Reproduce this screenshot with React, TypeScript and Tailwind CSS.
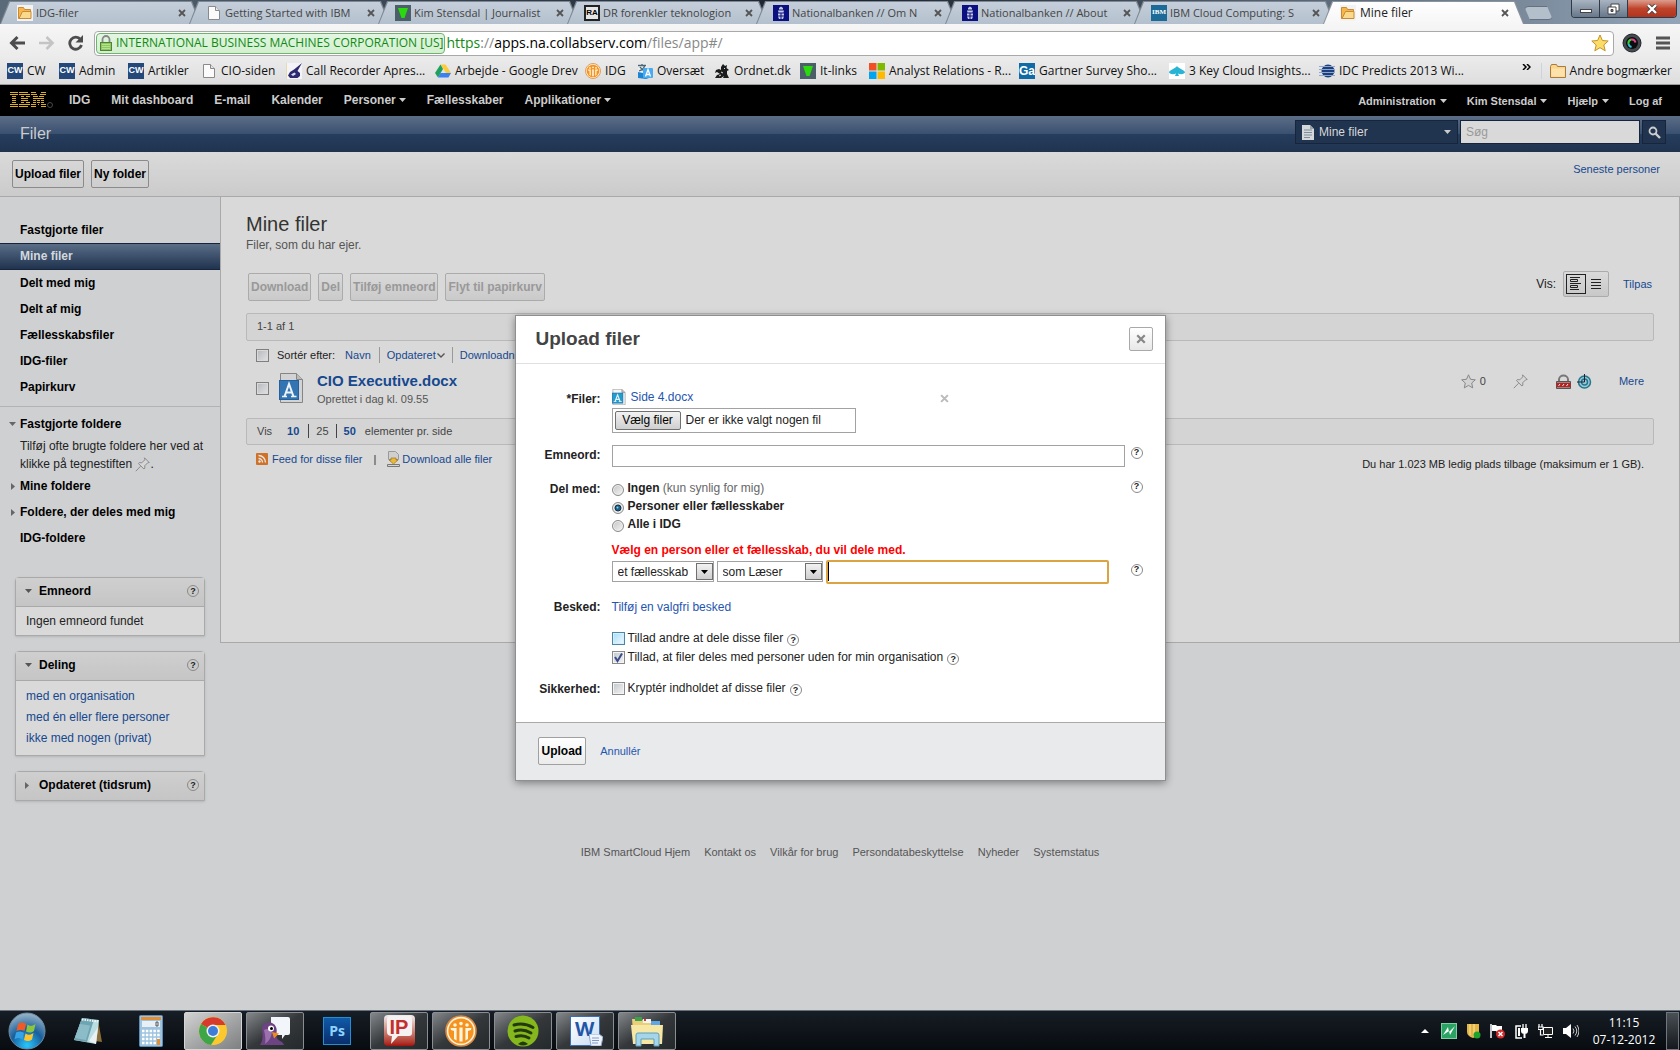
import type { ReactNode } from "react";

const PageIcon = () => (
	<svg width="16" height="16" viewBox="0 0 16 16" className="shrink-0">
		<path d="M2.5 1.5h7l4 4v9h-11z" fill="#fbfbfb" stroke="#8a8a8a" />
		<path d="M9.5 1.5v4h4" fill="#e6e6e6" stroke="#8a8a8a" />
	</svg>
);

const FolderTabIcon = () => (
	<svg width="16" height="16" viewBox="0 0 16 16" className="shrink-0">
		<rect width="16" height="16" fill="#f3f3f3" />
		<path d="M1.500 2.500h5l1 2h6v9h-12z" fill="#f7b64c" stroke="#c98a35" />
		<path d="M5.500 6.500h8.500v7h-12z" fill="#fbd98c" stroke="#c98a35" />
	</svg>
);

const GreenTriangleIcon = () => (
	<svg width="16" height="16" viewBox="0 0 16 16" className="shrink-0">
		<rect width="16" height="16" fill="#4b5f69" />
		<path d="M3 3h10l-3.500 10h-3z" fill="#2bd90f" />
	</svg>
);

const BankIcon = () => (
	<svg width="16" height="16" viewBox="0 0 16 16" className="shrink-0">
		<rect width="16" height="16" fill="#0b1080" />
		<path d="M6 3l2-1.500L10 3v1.500H6zM5 5.500h6l-.5 2h-5zM5 8.500h2.500v2H5zM8.500 8.500H11v2H8.500zM5 11.500h2.500v2.500H6zM8.500 11.500H11l-1 2.500H8.500z" fill="#c5cbe6" />
	</svg>
);

const RaIcon = () => (
	<span className="flex size-4 shrink-0 items-center justify-center border-2 border-[#222] bg-[#e6e6e6] font-['Liberation_Sans',sans-serif] text-[8px] font-bold leading-none text-black">RA</span>
);

const IbmSmallIcon = () => (
	<span className="flex size-4 shrink-0 items-center justify-center bg-[#1b6a97] font-['Liberation_Serif',serif] text-[7px] font-bold leading-none text-white">IBM</span>
);

const CwIcon = () => (
	<span className="flex size-4 shrink-0 items-center justify-center bg-[#25487a] font-['Liberation_Sans',sans-serif] text-[9px] font-bold leading-none text-white">CW</span>
);

const CallIcon = () => (
	<svg width="16" height="16" viewBox="0 0 16 16">
		<rect width="16" height="16" fill="#f4f4f8" />
		<path d="M16 0L8 6.500 4 9 2 12.500 4 15h7.500L14 13v-3l-2.500-2z" fill="#2d2a70" />
		<path d="M5 11.500l3.500-2 1.500 1.500-3 2z" fill="#dcdcef" />
		<path d="M0 0h1v16H0z" fill="#e3dcae" />
	</svg>
);

const DriveIcon = () => (
	<svg width="16" height="16" viewBox="0 0 16 16">
		<path d="M5.500 1.500h5L16 10h-5z" fill="#fccb35" />
		<path d="M5.500 1.500L8 6l-5 8.500L0 10z" fill="#1fa15d" />
		<path d="M5.500 10H16l-2.500 4.500H3z" fill="#3d80f0" />
	</svg>
);

const IdgIcon = ({ size = 16 }: { size?: number }) => (
	<svg width={size} height={size} viewBox="0 0 16 16">
		<circle cx="8" cy="8" r="7.500" fill="#fff1d8" stroke="#d98a3c" strokeWidth=".8" />
		<circle cx="8" cy="8" r="6.300" fill="#f6921e" />
		<g fill="#fff4dc">
			<circle cx="5" cy="5" r=".9" />
			<circle cx="8" cy="4.300" r=".9" />
			<circle cx="11" cy="5" r=".9" />
			<path d="M2.800 6.500h3v6.200L4.500 12V8L3 7.500zM7.200 6.200h1.600v7H7.200zM13.200 6.500h-3v6.200l1.300-.7V8l1.500-.5z" />
		</g>
	</svg>
);

const TranslateIcon = () => (
	<svg width="16" height="16" viewBox="0 0 16 16">
		<rect x="1" y="1" width="9" height="9" fill="#e9eef2" />
		<path d="M1 2.500h8M5 1v2M2 8c3-1 5-3 5.500-5M3 4c1 2 3 3 5 4" stroke="#4b6570" strokeWidth="1.300" fill="none" />
		<path d="M1 9l5 1 9-5v9l-6 2-8-1z" fill="#1c84d6" />
		<rect x="6" y="5" width="10" height="10" rx="1" fill="#4aaaf0" />
		<path d="M8.500 13.500L11 6.500l2.500 7M9.500 11.500h3" stroke="#fff" strokeWidth="1.300" fill="none" />
	</svg>
);

const LionIcon = () => (
	<svg width="16" height="16" viewBox="0 0 16 16">
		<path d="M9 1l2 2 2-1-.5 3L15 7l-2 1v3l2 4H9l1-2-3 2H1l2-3 3-1-3-2-2 1 1-3 3-1 2 1V4z" fill="#1b1b1b" />
		<path d="M7 9l2 1M10 5l1 1M5 13l2-1" stroke="#ddd" />
	</svg>
);

const WindowsTilesIcon = () => (
	<svg width="16" height="16" viewBox="0 0 16 16">
		<path d="M0 0h7.500v7.500H0z" fill="#f25022" />
		<path d="M8.500 0H16v7.500H8.500z" fill="#7fba00" />
		<path d="M0 8.500h7.500V16H0z" fill="#00a4ef" />
		<path d="M8.500 8.500H16V16H8.500z" fill="#ffb900" />
	</svg>
);

const GartnerIcon = () => (
	<span className="flex size-4 shrink-0 items-center justify-center overflow-hidden bg-[#0f6aa6] font-['Liberation_Sans',sans-serif] text-[12px] font-bold leading-none text-white">Ga</span>
);

const CloudSpadeIcon = () => (
	<svg width="16" height="16" viewBox="0 0 16 16">
		<rect width="16" height="16" fill="#fff" />
		<path d="M8 3c1 2 7 4 8 6 0 2-4 3-7 1.500l1 2.500H6l1-2.500C4 12 0 11 0 9c1-2 7-4 8-6z" fill="#28b4d4" />
	</svg>
);

const IdcIcon = () => (
	<svg width="16" height="16" viewBox="0 0 16 16">
		<circle cx="9" cy="8" r="6.500" fill="#1c3f7d" />
		<path d="M0 3.500h16M0 6.500h16M0 9.500h16M0 12.500h16" stroke="#8ea6cc" />
	</svg>
);

const YellowFolderIcon = () => (
	<svg width="16" height="16" viewBox="0 0 16 16">
		<path d="M.5 3.500l1-2h5l1 2h8v11H.5z" fill="#fbd58c" stroke="#a87b3f" />
		<path d="M1.500 5.500h13v8h-13z" fill="#fde3ab" />
	</svg>
);

const CloseX = ({ size, color }: { size: number; color: string }) => (
	<svg width={size} height={size} viewBox="0 0 8 8">
		<path d="M1 1l6 6M7 1L1 7" stroke={color} strokeWidth="1.800" />
	</svg>
);

const Caret = ({ color = "#ccc" }: { color?: string }) => (
	<svg width="7" height="4" viewBox="0 0 7 4">
		<path d="M0 0h7L3.500 4z" fill={color} />
	</svg>
);

const CaretRight = () => (
	<svg width="4" height="7" viewBox="0 0 4 7">
		<path d="M0 0v7l4-3.500z" fill="#666" />
	</svg>
);

const PinIcon = () => (
	<svg width="15" height="15" viewBox="0 0 15 15" className="inline-block align-middle">
		<path d="M9.500.8l4.700 4.700-1.500.3-3 3 .2 2.400-1 .8L3.500 6.600l.8-1 2.500.2 3-3z M5.500 9.300L.8 14.200" fill="#d6d6d6" stroke="#8b8b8b" />
	</svg>
);

const Help = ({ label = "Hjælp" }: { label?: string }) => (
	<button type="button" aria-label={label} className="flex size-3 shrink-0 items-center justify-center rounded-full border border-[#8a8a8a] text-[9px] font-bold leading-none text-[#222]">
		?
	</button>
);

const DocIcon = ({ small }: { small?: boolean }) => (
	<svg width={small ? 14 : 25} height={small ? 16 : 30} viewBox="0 0 25 30" preserveAspectRatio="none">
		<path d="M1.500.5h16l6 6v23h-22z" fill={small ? "#f5f5f5" : "#d3d3d3"} stroke="#858585" />
		<path d="M17.500.5v6h6" fill="#bbb" stroke="#858585" />
		<rect x=".5" y="7.500" width="19" height="19" fill={small ? "#1f9fcf" : "#3374b3"} stroke="#24609c" />
		<path d="M5.500 23.500L10 11l4.500 12.500M7 19.500h6" fill="none" stroke="#eef3f8" strokeWidth="2" />
		<path d="M3 23.500h5M12 23.500h5.500" stroke="#eef3f8" strokeWidth="1.500" />
	</svg>
);

const tabs = [
	{ title: "IDG-filer", icon: <FolderTabIcon /> },
	{ title: "Getting Started with IBM", icon: <PageIcon /> },
	{ title: "Kim Stensdal | Journalist", icon: <GreenTriangleIcon /> },
	{ title: "DR forenkler teknologion", icon: <RaIcon /> },
	{ title: "Nationalbanken // Om N", icon: <BankIcon /> },
	{ title: "Nationalbanken // About", icon: <BankIcon /> },
	{ title: "IBM Cloud Computing: S", icon: <IbmSmallIcon /> },
	{ title: "Mine filer", icon: <FolderTabIcon />, active: true },
];

const Tab = ({ title, icon, active }: { title: string; icon: ReactNode; active?: boolean }) => (
	<div className={active ? "relative z-10 -ml-3 h-6 w-[201px] shrink-0 bg-[#8a939d] [clip-path:polygon(0_100%,9px_1px,192px_1px,201px_100%)]" : "-ml-3 h-6 w-[201px] shrink-0 bg-[#7d8894] [clip-path:polygon(0_100%,9px_1px,192px_1px,201px_100%)]"}>
		<div
			className={
				active
					? "flex h-6 items-center bg-linear-to-b from-white to-[#f6f6f6] pt-px pr-[15px] pl-[17px] [clip-path:polygon(1px_100%,10px_2px,191px_2px,200px_100%)]"
					: "flex h-6 items-center bg-linear-to-b from-[#c6d0dc] to-[#b4c0cd] pt-px pr-[15px] pl-[17px] [clip-path:polygon(1px_100%,10px_2px,191px_2px,200px_100%)]"
			}
		>
			{icon}
			<span
				className={
					active
						? "ml-1 flex-1 text-[12px] leading-4 whitespace-nowrap text-[#222]"
						: "ml-[3px] flex-1 text-[11px] leading-4 whitespace-nowrap text-[#444]"
				}
			>
				{title}
			</span>
			<button aria-label="Luk fane" className="ml-1">
				<CloseX size={8} color="#555" />
			</button>
		</div>
	</div>
);

const TabStrip = () => (
	<div className="flex h-6 items-start bg-linear-to-r from-[#5b6a79] via-[#1a222c] to-[#93a5b8] pl-3">
		{tabs.map((tab, i) => (
			<Tab key={i} {...tab} />
		))}
		<button aria-label="Ny fane" className="mt-[6px] h-[14px] w-[29px] shrink-0 rounded-sm border border-[#66717d] bg-[#b3bfcb] [clip-path:polygon(0_0,23px_0,100%_100%,6px_100%)]"></button>
		<div className="ml-auto mr-[3px] flex h-[18px] overflow-hidden rounded-b border border-t-0 border-[#2f3a46]">
			<button aria-label="Minimer" className="flex w-7 items-center justify-center border-r border-[#2f3a46] bg-linear-to-b from-[#a9b4c1] to-[#68788a]">
				<span className="mt-1 h-1 w-3 border border-[#444] bg-white"></span>
			</button>
			<button aria-label="Gendan" className="flex w-7 items-center justify-center border-r border-[#2f3a46] bg-linear-to-b from-[#a9b4c1] to-[#68788a]">
				<svg width="13" height="12" viewBox="0 0 13 12">
					<path d="M4 1h8v7H4z" fill="#fff" stroke="#444" />
					<path d="M1 4h8v7H1z" fill="#fff" stroke="#444" />
					<path d="M4 6.500h2v2H4z" fill="#68788a" stroke="#444" />
				</svg>
			</button>
			<button aria-label="Luk" className="flex w-12 items-center justify-center bg-linear-to-b from-[#dc9d8e] via-[#c0432b] to-[#b0341d]">
				<svg width="12" height="10" viewBox="0 0 12 10">
					<path d="M2 1l8 8M10 1L2 9" stroke="#444" strokeWidth="4" />
					<path d="M2 1l8 8M10 1L2 9" stroke="#fff" strokeWidth="2.400" />
				</svg>
			</button>
		</div>
	</div>
);

const AddressBar = () => (
	<div className="flex h-[34px] items-center bg-linear-to-b from-[#f6f6f6] to-[#ebebeb] pt-1 pr-[10px] pl-[9px]">
		<button aria-label="Tilbage" className="mr-3">
			<svg width="17" height="16" viewBox="0 0 17 16">
				<path d="M16 8H3M8.500 2L2.500 8l6 6" fill="none" stroke="#4d4d4d" strokeWidth="3" />
			</svg>
		</button>
		<button aria-label="Frem" className="mr-3">
			<svg width="17" height="16" viewBox="0 0 17 16">
				<path d="M1 8h13M8.500 2l6 6-6 6" fill="none" stroke="#c4c4c4" strokeWidth="2.600" />
			</svg>
		</button>
		<button aria-label="Genindlæs" className="mr-[10px]">
			<svg width="17" height="16" viewBox="0 0 17 16">
				<path d="M13.500 4.500A6 6 0 1 0 14.500 10" fill="none" stroke="#4d4d4d" strokeWidth="2.800" />
				<path d="M16 0v7.500H8.500z" fill="#4d4d4d" />
			</svg>
		</button>
		<div className="flex h-[25px] min-w-0 flex-1 items-center rounded-sm border border-[#a9a9a9] bg-white pr-1 pl-px">
			<div className="flex h-[21px] shrink-0 items-center rounded-sm border border-[#6fb36f] bg-linear-to-b from-[#e2f6e2] to-[#d3efd0] pr-px pl-[3px] text-[12px] leading-4 whitespace-nowrap text-[#128a12]">
				<svg width="12" height="16" viewBox="0 0 12 16" className="mr-1 shrink-0">
					<path d="M2.500 8V4.500a3.500 3.500 0 0 1 7 0V8" fill="none" stroke="#888" strokeWidth="1.800" />
					<rect x=".5" y="7.500" width="11" height="8" fill="#8ccb5b" stroke="#55803a" />
					<path d="M2 9.500h8M2 11.500h8M2 13.500h8" stroke="#b6e192" />
				</svg>
				INTERNATIONAL BUSINESS MACHINES CORPORATION [US]
			</div>
			<div className="ml-px flex-1 text-[14px] leading-5 text-[#888]">
				<span className="text-[#128a12]">https</span>://<span className="text-black">apps.na.collabserv.com</span>/files/app#/
			</div>
			<svg width="18" height="18" viewBox="0 0 18 18">
				<path d="M9 1l2.400 5.500 5.800.5-4.400 4 1.400 5.800L9 13.700l-5.200 3.100L5.200 11 .8 7l5.800-.5z" fill="#fbdc6a" stroke="#c49325" />
			</svg>
		</div>
		<svg width="20" height="20" viewBox="0 0 20 20" className="ml-2">
			<circle cx="10" cy="10" r="9" fill="#444a50" stroke="#22262a" />
			<circle cx="10" cy="10" r="6" fill="#0d0d0d" />
			<path d="M6.500 11A4 4 0 0 1 9 6.500" stroke="#3ad13a" strokeWidth="2" fill="none" />
			<path d="M9 6.500a4 4 0 0 1 4.500 3" stroke="#e0468e" strokeWidth="2" fill="none" />
			<path d="M6.500 11a4 4 0 0 0 3 3" stroke="#33c3d8" strokeWidth="2" fill="none" />
		</svg>
		<button aria-label="Menu" className="ml-[14px]">
			<svg width="14" height="14" viewBox="0 0 14 14">
				<path d="M0 2h14M0 7h14M0 12h14" stroke="#555" strokeWidth="3" />
			</svg>
		</button>
	</div>
);

const bookmarks = [
	{ title: "CW", icon: <CwIcon />, width: "w-[52px]" },
	{ title: "Admin", icon: <CwIcon />, width: "w-[69px]" },
	{ title: "Artikler", icon: <CwIcon />, width: "w-[73px]" },
	{ title: "CIO-siden", icon: <PageIcon />, width: "w-[85px]" },
	{ title: "Call Recorder Apres...", icon: <CallIcon />, width: "w-[149px]" },
	{ title: "Arbejde - Google Drev", icon: <DriveIcon />, width: "w-[150px]" },
	{ title: "IDG", icon: <IdgIcon />, width: "w-[52px]" },
	{ title: "Oversæt", icon: <TranslateIcon />, width: "w-[77px]" },
	{ title: "Ordnet.dk", icon: <LionIcon />, width: "w-[86px]" },
	{ title: "It-links", icon: <GreenTriangleIcon />, width: "w-[69px]" },
	{ title: "Analyst Relations - R...", icon: <WindowsTilesIcon />, width: "w-[150px]" },
	{ title: "Gartner Survey Sho...", icon: <GartnerIcon />, width: "w-[150px]" },
	{ title: "3 Key Cloud Insights...", icon: <CloudSpadeIcon />, width: "w-[150px]" },
	{ title: "IDC Predicts 2013 Wi...", icon: <IdcIcon />, width: "w-[150px]" },
];

const Bookmarks = () => (
	<div className="flex h-[27px] items-center border-b border-[#9c9c9c] bg-linear-to-b from-[#ebebeb] to-[#dedede] pr-2 pb-px pl-[7px] text-[12px] leading-4 whitespace-nowrap text-[#111]">
		{bookmarks.map((b) => (
			<a key={b.title} href="#" className={`flex shrink-0 items-center gap-1 ${b.width}`}>
				{b.icon}
				{b.title}
			</a>
		))}
		<button aria-label="Flere bogmærker" className="ml-auto pb-2">
			<svg width="9" height="6" viewBox="0 0 9 6">
				<path d="M1 0l3 3-3 3M5 0l3 3-3 3" fill="none" stroke="#000" strokeWidth="1.500" />
			</svg>
		</button>
		<a href="#" className="ml-[10px] flex items-center gap-1 border-l border-[#ccd3dc] pl-2">
			<YellowFolderIcon />
			Andre bogmærker
		</a>
	</div>
);

const mainNav = ["IDG", "Mit dashboard", "E-mail", "Kalender", "Personer", "Fællesskaber", "Applikationer"];
const userNav = ["Administration", "Kim Stensdal", "Hjælp", "Log af"];

const TopNav = () => (
	<nav className="flex h-[31px] items-center bg-black pr-[18px] pb-[2px] pl-[10px] font-bold text-[#ccc]">
		<svg width="43" height="16" viewBox="0 0 43 16" className="mr-4">
			<g stroke="#dcae22" transform="translate(0 -.5)">
				<path d="M0 1h8M0 3h8M2 5h4M2 7h4M2 9h4M2 11h4M0 13h8M0 15h8" />
				<path d="M9 1h9M9 3h11M11 5h3M16 5h4M11 7h7M11 9h7M11 11h3M16 11h4M9 13h11M9 15h9" />
				<path d="M21 1h5M31 1h5M21 3h6M30 3h6M23 5h5M29 5h5M23 7h11M23 9h3M27 9h3M31 9h3M23 11h3M27 11h3M31 11h3M21 13h5M28 13h1M31 13h5M21 15h5M31 15h5" />
			</g>
			<circle cx="40" cy="13" r="2.500" fill="none" stroke="#666" strokeWidth=".7" />
		</svg>
		<div className="flex items-center gap-[21px] text-[12px] leading-4">
			{mainNav.map((item) => (
				<a key={item} href="#" className="flex items-center gap-[3px]">
					{item}
					{(item === "Personer" || item === "Applikationer") && <Caret />}
				</a>
			))}
		</div>
		<div className="ml-auto flex items-center gap-5 pt-[2px] text-[11px] leading-4">
			{userNav.map((item) => (
				<a key={item} href="#" className="flex items-center gap-1">
					{item}
					{item !== "Log af" && <Caret />}
				</a>
			))}
		</div>
	</nav>
);

const AppHeader = () => (
	<header className="flex h-9 items-center bg-[linear-gradient(#5c6e87,#3a5070_50%,#263d5e_51%,#20344f)] pr-[14px] pl-5">
		<h1 className="text-[16px] leading-5 text-[#ccc]">Filer</h1>
		<div className="mb-1 ml-auto flex h-6 gap-[2px]">
			<button className="flex w-[163px] items-center border border-[#16253b] bg-[#20334f] px-[6px] text-[12px] leading-4 text-[#d8d8d8]">
				<svg width="12" height="15" viewBox="0 0 12 15" className="mr-[5px]">
					<path d="M0 0h8l4 4v11H0z" fill="#d5d8db" />
					<path d="M2 5h8M2 7.500h8M2 10h8M2 12.500h6" stroke="#7d8b9a" />
					<path d="M8 0v4h4" fill="#98a3ae" />
				</svg>
				Mine filer
				<span className="ml-auto flex">
					<Caret />
				</span>
			</button>
			<input aria-label="Søg" placeholder="Søg" className="w-[180px] border border-[#16253b] bg-[#d9d9d9] px-[5px] text-[12px] leading-4 placeholder:text-[#999]" />
			<button aria-label="Søg i filer" className="flex w-6 items-center justify-center border border-[#16253b] bg-[#20334f]">
				<svg width="13" height="13" viewBox="0 0 13 13">
					<circle cx="5" cy="5" r="3.500" fill="none" stroke="#ccc" strokeWidth="1.800" />
					<path d="M7.500 7.500L12 12" stroke="#ccc" strokeWidth="2.400" />
				</svg>
			</button>
		</div>
	</header>
);

const Actions = () => (
	<div className="flex h-[45px] items-center gap-[7px] border-b border-[#a9a9a9] bg-linear-to-b from-[#dadada] to-[#cbcbcb] pr-5 pl-3 text-[12px] leading-4">
		<button className="h-7 rounded-xs border border-[#8b8b8b] px-[2px] font-bold text-black">Upload filer</button>
		<button className="h-7 rounded-xs border border-[#8b8b8b] px-[2px] font-bold text-black">Ny folder</button>
		<a href="#" className="ml-auto mb-[10px] text-[11px] text-[#16488f]">
			Seneste personer
		</a>
	</div>
);

const Panel = ({ title, open, children }: { title: string; open?: boolean; children?: ReactNode }) => (
	<section className="mx-[15px] mb-[15px] rounded-t-sm border border-[#a9a9a9] bg-[#d9d9d9] shadow-sm">
		<div className="flex h-7 items-center bg-linear-to-b from-[#cfcfcf] to-[#c5c5c5] pr-[5px] pb-[2px] pl-[9px] font-bold text-black">
			<span className="w-[14px]">{open ? <Caret color="#555" /> : <CaretRight />}</span>
			<h2>{title}</h2>
			<span className="ml-auto">
				<Help label={`Hjælp til ${title}`} />
			</span>
		</div>
		{children}
	</section>
);

const Sidebar = () => (
	<aside className="w-[220px] shrink-0 pt-5 text-[12px] leading-[26px]">
		<nav className="font-bold text-black">
			<a href="#" className="block pl-5">Fastgjorte filer</a>
			<a href="#" className="block border-y border-[#16253b] bg-linear-to-b from-[#5a6e88] to-[#20344f] pl-5 leading-[25px] text-[#d4d8dd]">Mine filer</a>
			<a href="#" className="block pl-5">Delt med mig</a>
			<a href="#" className="block pl-5">Delt af mig</a>
			<a href="#" className="block pl-5">Fællesskabsfiler</a>
			<a href="#" className="block pl-5">IDG-filer</a>
			<a href="#" className="block pl-5">Papirkurv</a>
		</nav>
		<div className="mt-[6px] border-t border-[#b2b3b4] pt-1 text-black">
			<a href="#" className="flex items-center pl-[9px] font-bold">
				<span className="flex w-[11px]"><Caret color="#666" /></span>
				Fastgjorte foldere
			</a>
			<p className="pr-2 pl-5 leading-[18px] text-[#222]">
				Tilføj ofte brugte foldere her ved at klikke på tegnestiften <PinIcon />.
			</p>
			<a href="#" className="flex items-center pl-[11px] font-bold">
				<span className="flex w-[9px]"><CaretRight /></span>
				Mine foldere
			</a>
			<a href="#" className="flex items-center pl-[11px] font-bold">
				<span className="flex w-[9px]"><CaretRight /></span>
				Foldere, der deles med mig
			</a>
			<a href="#" className="block pl-5 font-bold">IDG-foldere</a>
		</div>
		<div className="pt-[26px] leading-4">
			<Panel title="Emneord" open>
				<p className="border-t border-[#a9a9a9] px-[10px] py-[6px] text-[#222]">Ingen emneord fundet</p>
			</Panel>
			<Panel title="Deling" open>
				<ul className="border-t border-[#a9a9a9] px-[10px] pt-[5px] pb-[6px] leading-[21px] text-[#16488f]">
					<li><a href="#">med en organisation</a></li>
					<li><a href="#">med én eller flere personer</a></li>
					<li><a href="#">ikke med nogen (privat)</a></li>
				</ul>
			</Panel>
			<Panel title="Opdateret (tidsrum)" />
		</div>
	</aside>
);

const FileList = () => (
	<main className="min-h-[446px] min-w-0 flex-1 border border-t-0 border-[#a9a9a9] bg-[#d9d9d9] pt-[15px] pr-[25px] pl-[25px] text-[12px] text-[#444]">
		<h2 className="text-[20px] leading-6 text-[#333]">Mine filer</h2>
		<p className="leading-[18px] text-[#555]">Filer, som du har ejer.</p>
		<div className="mt-[19px] flex h-7 items-center gap-[7px] pl-[2px] font-bold text-[#999]">
			<button className="h-7 rounded-xs border border-[#ababab] bg-linear-to-b from-[#d9d9d9] to-[#cacaca] px-[2px]">Download</button>
			<button className="h-7 rounded-xs border border-[#ababab] bg-linear-to-b from-[#d9d9d9] to-[#cacaca] px-[2px]">Del</button>
			<button className="h-7 rounded-xs border border-[#ababab] bg-linear-to-b from-[#d9d9d9] to-[#cacaca] px-[2px]">Tilføj emneord</button>
			<button className="h-7 rounded-xs border border-[#ababab] bg-linear-to-b from-[#d9d9d9] to-[#cacaca] px-[2px]">Flyt til papirkurv</button>
			<span className="ml-auto pb-[6px] font-normal text-[#222]">Vis:</span>
			<div className="mb-[7px] flex h-[26px] w-[46px] items-center rounded-xs border border-[#ababab] bg-linear-to-b from-[#dadada] to-[#c8c8c8] pl-[2px]">
				<button aria-label="Detaljer" className="flex size-5 items-center justify-center border border-[#222]">
					<svg width="12" height="13" viewBox="0 0 12 13">
						<path d="M0 .5h10M0 6.500h11M0 12.500h9" stroke="#222" />
						<path d="M.5 2.500h7v2h-7zM.5 8.500h7v2h-7z" fill="none" stroke="#222" />
					</svg>
				</button>
				<button aria-label="Liste" className="flex size-5 items-center justify-center">
					<svg width="10" height="10" viewBox="0 0 10 10">
						<path d="M0 .5h10M0 3.500h10M0 6.500h10M0 9.500h10" stroke="#222" />
					</svg>
				</button>
			</div>
			<a href="#" className="mr-[2px] ml-[7px] pb-[6px] text-[11px] font-normal text-[#16488f]">Tilpas</a>
		</div>
		<div className="mt-3 h-7 rounded-xs border border-[#b9b9b9] bg-[#d4d4d4] pl-[10px] text-[11px] leading-6">1-1 af 1</div>
		<div className="flex h-7 items-center pl-[10px] text-[11px] leading-4 text-[#16488f]">
			<input type="checkbox" aria-label="Vælg alle" className="size-[13px] appearance-none border border-[#7f7f7f] bg-linear-to-br from-[#b5b9bd] to-[#e2e2e2] shadow-[inset_0_0_0_1px_#dadada]" />
			<span className="ml-2 text-[#222]">Sortér efter:</span>
			<a href="#" className="ml-[10px] border-r border-[#999] pr-2">Navn</a>
			<a href="#" className="flex items-center border-r border-[#999] px-[7px]">
				Opdateret
				<svg width="8" height="5" viewBox="0 0 8 5" className="ml-px">
					<path d="M.5.500L4 4 7.500.5" fill="none" stroke="#555" strokeWidth="1.400" />
				</svg>
			</a>
			<a href="#" className="px-[7px]">Downloadninger</a>
		</div>
		<ul>
			<li className="flex items-start pt-[2px] pl-[10px] text-[11px] leading-4">
				<input type="checkbox" aria-label="Vælg CIO Executive.docx" className="mt-[11px] size-[13px] appearance-none border border-[#7f7f7f] bg-linear-to-br from-[#b5b9bd] to-[#e2e2e2] shadow-[inset_0_0_0_1px_#dadada]" />
				<span className="mt-[2px] ml-[10px]"><DocIcon /></span>
				<div className="ml-[13px]">
					<a href="#" className="block text-[15px] leading-5 font-bold text-[#16488f]">CIO Executive.docx</a>
					<p className="text-[#555]">Oprettet i dag kl. 09.55</p>
				</div>
				<div className="mt-[2px] mr-[10px] ml-auto flex items-center">
					<button className="mr-[27px] flex items-center gap-1">
						<svg width="15" height="15" viewBox="0 0 15 15">
							<path d="M7.500.8l2 4.500 4.800.5-3.600 3.200 1 4.900-4.200-2.500-4.200 2.500 1-4.900L.7 5.800l4.800-.5z" fill="#d3d3d3" stroke="#888" />
						</svg>
						0
					</button>
					<button aria-label="Fastgør" className="mr-[28px] flex"><PinIcon /></button>
					<svg width="15" height="15" viewBox="0 0 15 15" className="mr-[6px]">
						<path d="M3 7V5.500a4.500 4 0 0 1 9 0V7" fill="none" stroke="#777" strokeWidth="2" />
						<path d="M.5 7.500h14v7H.5z" fill="#8b8b8b" stroke="#555" />
						<path d="M.5 9h14v4H.5z" fill="#c01d1d" />
						<path d="M2.500 12l1.500-2M6.500 12L8 10M10.500 12l1.500-2" stroke="#eee" />
					</svg>
					<svg width="15" height="15" viewBox="0 0 15 15" className="mr-[27px]">
						<circle cx="7.500" cy="8" r="6" fill="#9fc6d3" stroke="#22788f" strokeWidth="1.500" />
						<circle cx="7.500" cy="8" r="3" fill="none" stroke="#22788f" strokeWidth="1.500" />
						<path d="M7.500 0v8H0" fill="none" stroke="#223" />
					</svg>
					<a href="#" className="text-[#16488f]">Mere</a>
				</div>
			</li>
		</ul>
		<div className="mt-[11px] flex h-[27px] items-center rounded-xs border border-[#b9b9b9] bg-[#d4d4d4] pb-[2px] pl-[10px] text-[11px] leading-[14px]">
			Vis
			<a href="#" className="ml-[15px] border-r border-[#444] pr-[9px] font-bold text-[#16488f]">10</a>
			<span className="border-r border-[#444] px-[7px]">25</span>
			<a href="#" className="px-[7px] font-bold text-[#16488f]">50</a>
			<span className="ml-[2px]">elementer pr. side</span>
		</div>
		<div className="mt-[5px] flex items-start pr-[10px] pl-[10px] text-[11px] leading-[18px] text-[#16488f]">
			<a href="#" className="flex items-center gap-1">
				<svg width="12" height="12" viewBox="0 0 12 12">
					<rect width="12" height="12" rx="1" fill="#d07128" />
					<circle cx="3.500" cy="8.500" r="1.200" fill="#e8e8e8" />
					<path d="M2.500 5.500a4 4 0 0 1 4 4M2.500 2.500a7 7 0 0 1 7 7" fill="none" stroke="#e8e8e8" strokeWidth="1.400" />
				</svg>
				Feed for disse filer
			</a>
			<span className="mx-[11px] text-[#333]">|</span>
			<a href="#" className="flex items-center gap-[2px]">
				<svg width="13" height="16" viewBox="0 0 13 16">
					<path d="M1.500.5h7l3 3v5h-10z" fill="#cfcfcf" stroke="#999" />
					<path d="M4 7h5v2h2l-4.500 4L2 9h2z" fill="#e9b93a" stroke="#9c761c" strokeWidth=".7" />
					<path d="M.5 13.500h12v2H.5z" fill="#d5d5d5" stroke="#777" />
				</svg>
				Download alle filer
			</a>
			<span className="ml-auto pt-[5px] text-[#222]">Du har 1.023 MB ledig plads tilbage (maksimum er 1 GB).</span>
		</div>
	</main>
);

const Row = ({ label, htmlFor, children }: { label: string; htmlFor?: string; children: ReactNode }) => (
	<div className="flex items-start">
		{htmlFor ? (
			<label htmlFor={htmlFor} className="w-[85px] shrink-0 pt-[2px] text-right font-bold">{label}</label>
		) : (
			<span className="w-[85px] shrink-0 pt-[2px] text-right font-bold">{label}</span>
		)}
		<div className="ml-[11px] min-w-0 flex-1">{children}</div>
	</div>
);

const Radio = ({ id, checked, children }: { id: string; checked?: boolean; children: ReactNode }) => (
	<div className="flex h-[18px] items-center gap-1">
		<span className="relative mt-1 flex">
			<input
				type="radio"
				name="share"
				id={id}
				defaultChecked={checked}
				className="size-3 appearance-none rounded-full border border-[#8a8a8a] bg-linear-to-br from-[#c5c5c5] to-[#f5f5f5] shadow-[inset_0_0_0_1px_#f0f0f0]"
			/>
			{checked && (
				<svg width="12" height="12" viewBox="0 0 12 12" className="pointer-events-none absolute inset-0">
					<circle cx="6" cy="6" r="3" fill="#1b5f8c" stroke="#173247" />
					<circle cx="5.500" cy="5.500" r="1" fill="#7fd0f2" />
				</svg>
			)}
		</span>
		<label htmlFor={id} className="font-bold">{children}</label>
	</div>
);

const Check = ({ id, checked, focus, children }: { id: string; checked?: boolean; focus?: boolean; children: ReactNode }) => (
	<div className="flex h-[19px] items-center">
		<span className="relative mr-[3px] flex">
			<input
				type="checkbox"
				id={id}
				defaultChecked={checked}
				className={
					focus
						? "size-[13px] appearance-none border border-[#4a86a8] bg-linear-to-br from-[#a9dcf7] to-[#eefaff] shadow-[inset_0_0_0_1px_#d5effb]"
						: "size-[13px] appearance-none border border-[#8a8a8a] bg-linear-to-br from-[#c3c7cb] to-[#f4f4f4] shadow-[inset_0_0_0_1px_#f4f4f4]"
				}
			/>
			{checked && (
				<svg width="13" height="13" viewBox="0 0 13 13" className="pointer-events-none absolute inset-0">
					<path d="M3 6l2.500 4L10 2.500" fill="none" stroke="#3a4c8c" strokeWidth="2" />
				</svg>
			)}
		</span>
		<label htmlFor={id}>{children}</label>
		<span className="mt-1 ml-1"><Help /></span>
	</div>
);

const Select = ({ label, value, width }: { label: string; value: string; width: string }) => (
	<div className={`relative h-[21px] ${width}`}>
		<select aria-label={label} className="h-[21px] w-full appearance-none border border-[#a2a2a2] bg-white pl-[5px] text-[12px] leading-4 text-[#222]">
			<option>{value}</option>
		</select>
		<span className="pointer-events-none absolute top-[2px] right-px flex h-[17px] w-[17px] items-center justify-center border border-[#707070] bg-linear-to-b from-[#f2f2f2] to-[#cfcfcf]">
			<Caret color="#000" />
		</span>
	</div>
);

const UploadDialog = () => (
	<div role="dialog" aria-label="Upload filer" className="w-[651px] border border-[#8f8f8f] bg-white text-[12px] leading-4 text-[#222] shadow-[0_2px_8px_rgba(0,0,0,0.4)]">
		<div className="flex h-12 items-center border-b border-[#e0e0e0] pr-3 pl-5">
			<h2 className="text-[19px] leading-6 font-bold text-[#444]">Upload filer</h2>
			<button aria-label="Luk dialog" className="ml-auto flex size-6 items-center justify-center rounded-xs border border-[#a9a9a9] bg-linear-to-b from-white to-[#e8e8e8]">
				<CloseX size={10} color="#888" />
			</button>
		</div>
		<form className="pt-[25px] pr-[22px] pb-6">
			<Row label="*Filer:" htmlFor="files">
				<div className="flex items-center gap-[5px]">
					<DocIcon small />
					<a href="#" className="text-[#1f56b0]">Side 4.docx</a>
					<button type="button" aria-label="Fjern" className="mt-1 mr-[194px] ml-auto"><CloseX size={9} color="#bbb" /></button>
				</div>
				<label htmlFor="files" className="mt-[3px] flex h-[25px] w-[244px] items-center border border-[#a2a2a2] pl-[2px]">
					<span className="mr-[5px] flex h-[19px] w-[66px] items-center justify-center rounded-xs border border-[#707070] bg-linear-to-b from-[#f2f2f2] to-[#cfcfcf] text-black">Vælg filer</span>
					Der er ikke valgt nogen fil
				</label>
				<input id="files" type="file" className="sr-only" />
			</Row>
			<div className="mt-3">
				<Row label="Emneord:" htmlFor="tags">
					<div className="flex items-start gap-[6px]">
						<input id="tags" className="h-[22px] min-w-0 flex-1 border border-[#a2a2a2]" />
						<span className="mt-[2px]"><Help /></span>
					</div>
				</Row>
			</div>
			<div className="mt-3">
				<Row label="Del med:">
					<div className="flex items-start">
						<div className="flex-1">
							<Radio id="share-none">
								Ingen <span className="font-normal text-[#666]">(kun synlig for mig)</span>
							</Radio>
							<Radio id="share-people" checked>Personer eller fællesskaber</Radio>
							<Radio id="share-all">Alle i IDG</Radio>
						</div>
						<span className="mt-[2px]"><Help /></span>
					</div>
					<p className="mt-[9px] font-bold text-[#f00]">Vælg en person eller et fællesskab, du vil dele med.</p>
					<div className="mt-[2px] flex items-center">
						<Select label="Modtagertype" value="et fællesskab" width="w-[102px]" />
						<span className="ml-[3px]"><Select label="Rolle" value="som Læser" width="w-[106px]" /></span>
						<div className="ml-[3px] flex h-6 flex-1 items-center rounded-xs border-2 border-[#d9a441] bg-white">
							<span className="h-[19px] w-px bg-black"></span>
							<input aria-label="Navn" className="min-w-0 flex-1 outline-none" />
						</div>
						<span className="mb-1 ml-[22px]"><Help /></span>
					</div>
				</Row>
			</div>
			<div className="mt-[13px]">
				<Row label="Besked:">
					<a href="#" className="block pt-[2px] text-[#1f56b0]">Tilføj en valgfri besked</a>
					<div className="mt-[14px]">
						<Check id="allow-share" focus>Tillad andre at dele disse filer</Check>
						<Check id="allow-external" checked>Tillad, at filer deles med personer uden for min organisation</Check>
					</div>
				</Row>
			</div>
			<div className="mt-3">
				<Row label="Sikkerhed:">
					<Check id="encrypt">Kryptér indholdet af disse filer</Check>
				</Row>
			</div>
		</form>
		<div className="flex h-[58px] items-center gap-[14px] border-t border-[#a9a9a9] bg-[#e9eaec] pl-[22px]">
			<button className="h-7 rounded-xs border border-[#a0a0a0] bg-linear-to-b from-white to-[#ebebeb] px-[3px] font-bold text-black">Upload</button>
			<a href="#" className="text-[11px] text-[#1f56b0]">Annullér</a>
		</div>
	</div>
);

const footerLinks = ["IBM SmartCloud Hjem", "Kontakt os", "Vilkår for brug", "Persondatabeskyttelse", "Nyheder", "Systemstatus"];

const Page = () => (
	<div className="relative flex flex-1 flex-col bg-[#cfd0d2] font-['Liberation_Sans',Arial,sans-serif]">
		<TopNav />
		<AppHeader />
		<Actions />
		<div className="flex items-start">
			<Sidebar />
			<FileList />
		</div>
		<footer className="flex justify-center gap-[14px] pt-7 text-[11px] leading-4 text-[#555]">
			{footerLinks.map((link) => (
				<a key={link} href="#">{link}</a>
			))}
		</footer>
		<div className="absolute inset-0 flex items-center justify-center">
			<UploadDialog />
		</div>
	</div>
);

const TaskButton = ({ label, active, children }: { label: string; active?: boolean; children: ReactNode }) => (
	<button
		aria-label={label}
		className={
			active
				? "mr-1 flex h-[38px] w-[58px] items-center justify-center rounded-xs border border-[#d5d5d5] bg-linear-to-br from-[#d2d2d2] to-[#7d7f80]"
				: "mr-1 flex h-[38px] w-[58px] items-center justify-center rounded-xs border border-[#8b8e90] bg-linear-to-br from-[#85888a] via-[#34383b] to-[#24292c]"
		}
	>
		{children}
	</button>
);

const Taskbar = () => (
	<footer className="flex h-10 shrink-0 items-center border-t border-[#66717c] bg-linear-to-b from-[#171d24] to-[#080c11] pr-px pl-2 text-white">
		<button aria-label="Start" className="mr-[26px]">
			<svg width="38" height="38" viewBox="0 0 38 38">
				<defs>
					<radialGradient id="orb" cx=".5" cy=".9" r=".9">
						<stop offset="0" stopColor="#29c6ff" />
						<stop offset=".5" stopColor="#185f9c" />
						<stop offset="1" stopColor="#9db6c8" />
					</radialGradient>
				</defs>
				<circle cx="19" cy="19" r="18" fill="url(#orb)" stroke="#6d8ba3" />
				<path d="M10 12c3-2 5-2 8 0l-1.500 7c-3-1.500-5-1.500-8 0z" fill="#ef5a27" />
				<path d="M19.500 12.500c3 2 5 1.500 8-.5L26 19c-3 2-5 2-8 .5z" fill="#8cc63f" />
				<path d="M8 20.500c3-1.500 5-1.500 8 .5l-1.500 6.500c-3-2-5-2-8 0z" fill="#34a3e8" />
				<path d="M17.500 21.500c3 2 5 1.500 8-.5L24 27.500c-3 2-5 2-8 .5z" fill="#fcc52e" />
			</svg>
		</button>
		<button aria-label="Notesblok" className="mr-[35px]">
			<svg width="32" height="32" viewBox="0 0 32 32">
				<path d="M26 5l4 22-7-1z" fill="#8a6d3a" />
				<path d="M10 3l17 2-3 24L2 25z" fill="#b9dde3" />
				<path d="M10 3l12 1.500L15 27 2 25z" fill="#6fa5b2" />
				<path d="M8 9l10 1.500L14 25 3 23z" fill="#8cbcc7" />
				<path d="M10 4.500l16 2" stroke="#f0f6f7" strokeWidth="2" strokeDasharray="1.500 1" />
				<path d="M17 26l9-14-2 17z" fill="#e9f1f3" />
			</svg>
		</button>
		<button aria-label="Lommeregner" className="mr-[21px]">
			<svg width="24" height="32" viewBox="0 0 24 32">
				<rect x=".5" y=".5" width="23" height="31" rx="1" fill="#9cc3e0" stroke="#5f8db5" />
				<path d="M2 2h20v3H2z" fill="#e58d33" />
				<path d="M3 6h18v6H3z" fill="#e8f0f5" />
				<path d="M17 7h2v4h-2z" fill="none" stroke="#333" strokeWidth=".8" />
				<path d="M3 16h18M3 20h18M3 24h18M3 28h14" stroke="#fff" strokeWidth="2.500" strokeDasharray="2.500 1.300" />
				<path d="M18 24h3v6h-3z" fill="#e58d33" />
			</svg>
		</button>
		<TaskButton label="Chrome" active>
			<svg width="30" height="30" viewBox="0 0 30 30">
				<circle cx="15" cy="15" r="14" fill="#fbc92d" />
				<path d="M15 15L3 8A14 14 0 0 1 27.500 9H15z" fill="#d63b2e" />
				<path d="M15 15L3 8a14 14 0 0 0 10 21l7-11z" fill="#3fa648" />
				<circle cx="15" cy="15" r="6.500" fill="#f2f2f2" />
				<circle cx="15" cy="15" r="5" fill="#3f7bd9" />
			</svg>
		</TaskButton>
		<TaskButton label="Pidgin">
			<svg width="32" height="32" viewBox="0 0 32 32">
				<path d="M12 2h17q2 0 2 2v14q0 2-2 2h-3l-3 4v-4H12z" fill="#f2f6fb" />
				<path d="M3 14C3 6 14 5 17 12c2 5-1 8 1 11 1 3 6 3 7 7H1c3-4 3-10 2-16z" fill="#6d4383" />
				<path d="M5 15c3-2 6-1 8 2-1 6-3 9-7 12 1-5 0-9-1-14z" fill="#9a70ad" />
				<circle cx="12" cy="13.500" r="3" fill="#fff" />
				<circle cx="12.500" cy="13.500" r="1.500" />
				<path d="M13 17l7 1.500-5 5z" fill="#ee8c22" />
			</svg>
		</TaskButton>
		<button aria-label="Photoshop" className="mr-1 flex h-[38px] w-[58px] items-center justify-center">
			<span className="flex size-7 items-center justify-center border border-[#1f8fd8] bg-linear-to-b from-[#0f5aa8] to-[#0a2e6c] text-[14px] leading-none font-bold text-[#8fd4ff]">Ps</span>
		</button>
		<TaskButton label="IP">
			<span className="relative flex size-[31px] items-start justify-center rounded-sm bg-linear-to-b from-[#eee] to-[#a30d0d]">
				<svg width="27" height="30" viewBox="0 0 27 30" className="absolute top-0 left-[2px]">
					<path d="M4 1h19q3 0 3 3v14q0 3-3 3H12l-7 8 1-8q-5 0-5-4V4q0-3 3-3z" fill="#f6f2f2" />
				</svg>
				<span className="relative font-['Liberation_Sans',sans-serif] text-[20px] leading-6 font-bold text-[#c32f2f]">IP</span>
			</span>
		</TaskButton>
		<TaskButton label="IDG"><IdgIcon size={32} /></TaskButton>
		<TaskButton label="Spotify">
			<svg width="32" height="32" viewBox="0 0 32 32">
				<circle cx="16" cy="16" r="15.500" fill="#84b81c" />
				<path d="M7 10c7-2 13-1 19 2.500M8 16c6-2 11-1 16 2M9 21.500c5-1.500 9-1 13 1.500" fill="none" stroke="#233a0c" strokeWidth="3" strokeLinecap="round" />
				<path d="M11 29q5-5 10 0-5 3-10 0z" fill="#233a0c" />
			</svg>
		</TaskButton>
		<TaskButton label="Word">
			<span className="relative flex size-7 items-start bg-linear-to-br from-white to-[#c9dcf2] pl-1 shadow-[0_0_0_1px_#3b6fb5]">
				<span className="text-[20px] leading-6 font-bold text-[#1f56a8]">W</span>
				<svg width="14" height="12" viewBox="0 0 14 12" className="absolute -right-1 -bottom-px">
					<path d="M0 0h10l4 3-2 9H2z" fill="#f0f4fa" stroke="#8aa8d0" />
					<path d="M3 4h7M3 6.500h7M3 9h6" stroke="#7c9ccc" />
				</svg>
			</span>
		</TaskButton>
		<TaskButton label="Stifinder">
			<svg width="34" height="32" viewBox="0 0 34 32">
				<path d="M2 4h10l2 3h16v22H4z" fill="#e9cf79" />
				<path d="M5 2h7v4H5z" fill="#3ba14b" />
				<path d="M13 4h8v4h-8z" fill="#f4f4f4" />
				<path d="M14 4h2v2h-2z" fill="#d23b2b" />
				<path d="M21 6h9v4h-9z" fill="#5da7e6" />
				<path d="M1 10h32l-1 19H3z" fill="#f6e7a5" />
				<path d="M6 31V20q0-2 2-2h19q2 0 2 2v11h-5v-7H11v7z" fill="#a4d5ea" stroke="#5f9dbb" />
			</svg>
		</TaskButton>
		<div className="ml-auto flex items-center">
			<button aria-label="Vis skjulte ikoner" className="mr-3">
				<svg width="8" height="4" viewBox="0 0 8 4"><path d="M0 4h8L4 0z" fill="#fff" /></svg>
			</button>
			<svg width="16" height="16" viewBox="0 0 16 16" className="mr-[9px]">
				<rect width="16" height="16" fill="#2aa363" />
				<rect x=".5" y=".5" width="15" height="15" fill="none" stroke="#7dd0a3" />
				<path d="M2 12l5-8 1 5 6-6-5 9-1-4z" fill="#fff" />
			</svg>
			<svg width="15" height="16" viewBox="0 0 15 16" className="mr-[9px]">
				<path d="M1 1h12v8q0 4-6 6-6-2-6-6z" fill="#e4b545" />
				<path d="M4 1v11M8 1v13" stroke="#fbe8a8" />
				<circle cx="11" cy="12" r="3.500" fill="#1fa32b" />
			</svg>
			<svg width="15" height="16" viewBox="0 0 15 16" className="mr-[9px]">
				<path d="M1 1v14" stroke="#fff" strokeWidth="1.500" />
				<path d="M2 2h4l1 1h5v6H7L6 8H2z" fill="#fff" />
				<circle cx="10.500" cy="11" r="4.500" fill="#d42a2a" />
				<path d="M8.500 9l4 4M12.500 9l-4 4" stroke="#fff" strokeWidth="1.500" />
			</svg>
			<svg width="15" height="16" viewBox="0 0 15 16" className="mr-[9px]">
				<path d="M7 3H2v12h6" fill="none" stroke="#fff" strokeWidth="1.500" />
				<path d="M4 5h2v8H4z" fill="#fff" />
				<path d="M9 1v4M12 1v4" stroke="#fff" strokeWidth="1.300" />
				<path d="M7 5h7v3q0 3-3.500 3T7 8zM9.500 10h2v5h-2z" fill="#fff" />
			</svg>
			<svg width="16" height="16" viewBox="0 0 16 16" className="mr-[9px]">
				<path d="M5.500 4.500h9v7h-9z" fill="#222" stroke="#fff" />
				<path d="M10 12v2M7 14.500h7" stroke="#fff" />
				<path d="M1 1v3M4 1v3M0 4h5v2.500H0zM2.500 6v6h3" fill="none" stroke="#fff" strokeWidth="1.200" />
			</svg>
			<svg width="16" height="16" viewBox="0 0 16 16" className="mr-[13px]">
				<path d="M0 5h3l5-4v14l-5-4H0z" fill="#fff" />
				<path d="M10 5.500q2 2.500 0 5M12 3.500q3.500 4.500 0 9M14 2q4 6 0 12" fill="none" stroke="#ccc" />
			</svg>
			<div className="w-16 text-center text-[12px] leading-[17px]">
				<div>11:15</div>
				<div className="whitespace-nowrap">07-12-2012</div>
			</div>
			<button aria-label="Vis skrivebord" className="ml-[10px] h-[38px] w-[13px] border border-[#70767c] bg-linear-to-b from-[#4a5056] to-[#15191d]"></button>
		</div>
	</footer>
);

const App = () => {
	return (
		<div className="flex min-h-screen flex-col overflow-hidden font-['Open_Sans','Noto_Sans',sans-serif]">
			<TabStrip />
			<AddressBar />
			<Bookmarks />
			<Page />
			<Taskbar />
		</div>
	);
};

export default App;
